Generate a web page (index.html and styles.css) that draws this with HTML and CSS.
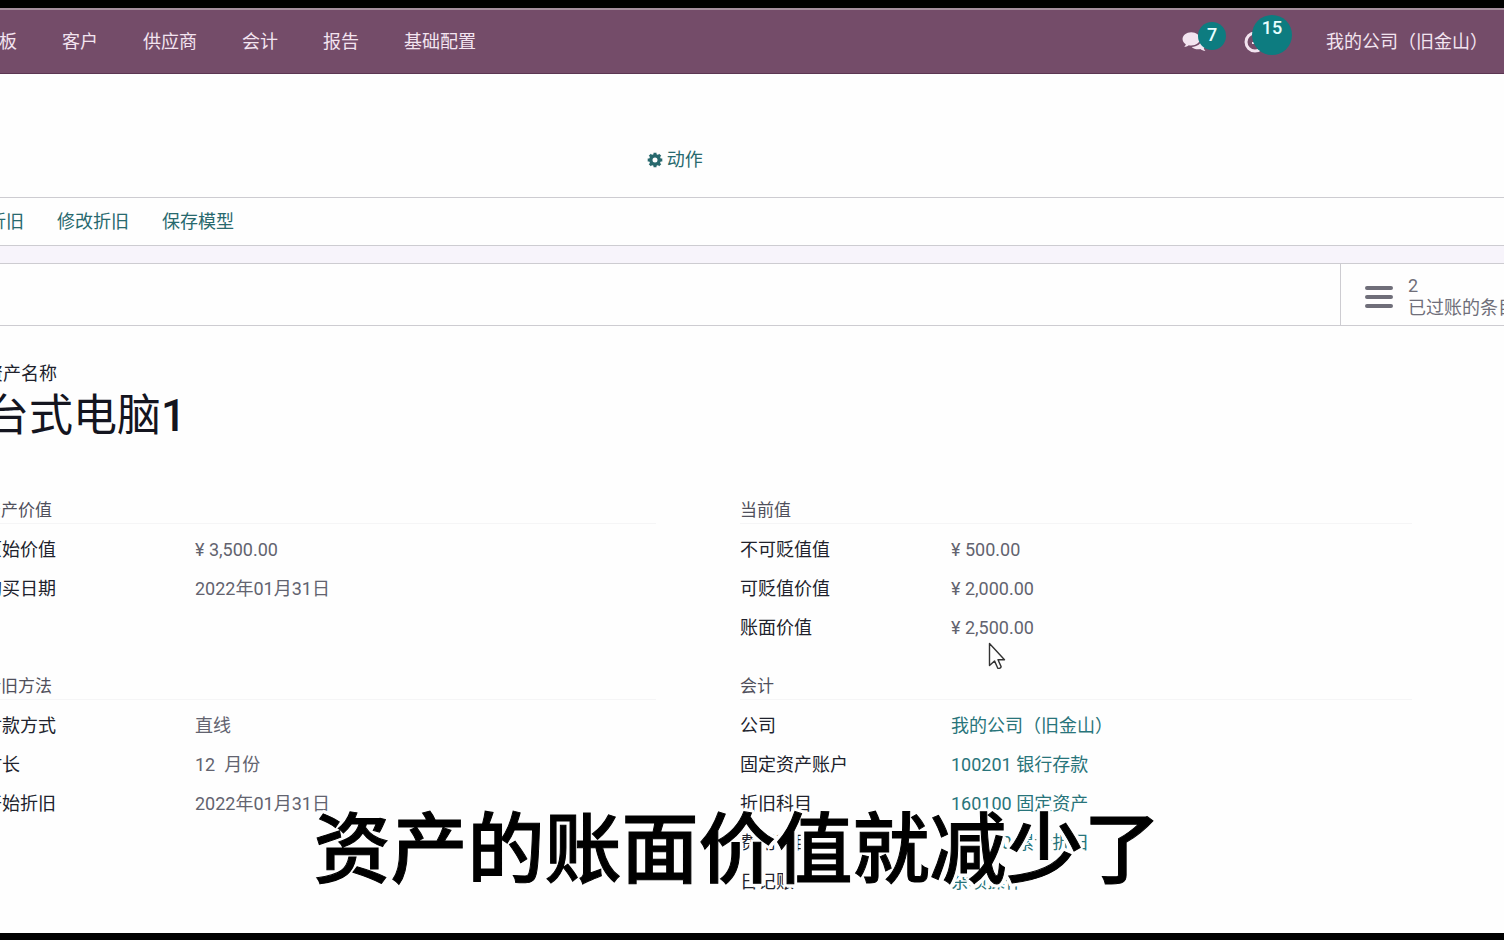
FILE: index.html
```html
<!DOCTYPE html>
<html lang="zh-CN">
<head>
<meta charset="utf-8">
<title>台式电脑1</title>
<link rel="stylesheet" href="styles.css">
</head>
<body>
<header class="navbar">
  <nav class="menu">
    <a href="#">仪表板</a>
    <a href="#">客户</a>
    <a href="#">供应商</a>
    <a href="#">会计</a>
    <a href="#">报告</a>
    <a href="#">基础配置</a>
  </nav>
  <div class="systray">
    <button class="tray" type="button" aria-label="消息">
      <svg viewBox="0 0 22 20" width="24" height="22"><path fill="currentColor" d="M8.500 1C4 1 .500 3.800.500 7.200c0 2 1.200 3.700 3 4.800-.2 1-.8 1.800-1.500 2.500 1.600-.1 3-.7 4.200-1.600.7.200 1.500.2 2.300.2 4.500 0 8-2.600 8-5.900S13 1 8.500 1z"/><path fill="currentColor" d="M18 7.500c0 4-4.200 7-9.200 7 1.500 1.400 3.600 2.200 6 2.200.7 0 1.400-.1 2-.2 1.200.9 2.700 1.600 4.700 1.700-.8-.8-1.300-1.600-1.500-2.500 1.200-.9 2-2.200 2-3.700 0-1.900-1.600-3.600-4-4.500z"/></svg>
      <span class="badge">7</span>
    </button>
    <button class="tray" type="button" aria-label="活动">
      <svg viewBox="0 0 22 22" width="22" height="22"><circle cx="11" cy="11" r="9" fill="none" stroke="currentColor" stroke-width="3"/><path d="M12 6v6H8" fill="none" stroke="currentColor" stroke-width="2"/></svg>
      <span class="badge badge-large">15</span>
    </button>
    <button class="company" type="button">我的公司（旧金山）</button>
  </div>
</header>

<div class="control-panel">
  <button class="action" type="button">
    <svg viewBox="0 0 16 16" width="16" height="16"><circle cx="8" cy="8" r="4.200" fill="none" stroke="currentColor" stroke-width="3.400"/><path d="M8 .700v3M8 12.300v3M.700 8h3M12.300 8h3M2.800 2.800l2 2M11.200 11.200l2 2M2.800 13.200l2-2M11.200 4.800l2-2" stroke="currentColor" stroke-width="3"/></svg>
    动作
  </button>
</div>

<div class="statusbar">
  <button type="button">计算折旧</button>
  <button type="button">修改折旧</button>
  <button type="button">保存模型</button>
</div>

<main class="sheet">
  <div class="button-box">
    <button class="stat" type="button">
      <svg viewBox="0 0 28 24" width="28" height="24"><path d="M2 3h24M2 12h24M2 21h24" stroke="currentColor" stroke-width="4" stroke-linecap="round"/></svg>
      <span class="stat-text"><span>2</span><span>已过账的条目</span></span>
    </button>
  </div>

  <div class="heading">
    <p>资产名称</p>
    <h1>台式电脑<span>1</span></h1>
  </div>

  <div class="groups">
    <section>
      <h2>资产价值</h2>
      <dl>
        <dt>原始价值</dt><dd>¥ 3,500.00</dd>
        <dt>购买日期</dt><dd>2022年01月31日</dd>
      </dl>
    </section>
    <section>
      <h2>当前值</h2>
      <dl>
        <dt>不可贬值值</dt><dd>¥ 500.00</dd>
        <dt>可贬值价值</dt><dd>¥ 2,000.00</dd>
        <dt>账面价值</dt><dd>¥ 2,500.00</dd>
      </dl>
    </section>
    <section>
      <h2>折旧方法</h2>
      <dl>
        <dt>付款方式</dt><dd>直线</dd>
        <dt>时长</dt><dd>12 &nbsp;月份</dd>
        <dt>开始折旧</dt><dd>2022年01月31日</dd>
      </dl>
    </section>
    <section>
      <h2>会计</h2>
      <dl>
        <dt>公司</dt><dd><a href="#">我的公司（旧金山）</a></dd>
        <dt>固定资产账户</dt><dd><a href="#">100201 银行存款</a></dd>
        <dt>折旧科目</dt><dd><a href="#">160100 固定资产</a></dd>
        <dt>费用科目</dt><dd><a href="#">160200 累计折旧</a></dd>
        <dt>日记账</dt><dd><a href="#">杂项操作</a></dd>
      </dl>
    </section>
  </div>
</main>

<svg class="cursor" viewBox="0 0 18 28" width="18" height="28"><path d="M1.500 1.500v22l5-4.600 3.300 7.400c1.600.3 3.200-.5 3.300-1.700L10 17.700h6.500z" fill="#fff" stroke="#333" stroke-width="1.400" stroke-linejoin="round"/></svg>
<p class="caption">资产的账面价值就减少了</p>
</body>
</html>
```
FILE: styles.css
```css
* { box-sizing: border-box; }

body {
  margin: 0;
  min-height: 100vh;
  display: flex;
  flex-direction: column;
  position: relative;
  overflow: hidden;
  border-top: 8px solid #000;
  border-bottom: 7px solid #000;
  background: #fefefe;
  color: #20222c;
  font: 18px/24px Roboto, "Noto Sans CJK SC", sans-serif;
}

h1, h2, p, dl, dd { margin: 0; font-weight: 400; }
a { color: #28747a; text-decoration: none; }
button { padding: 0; border: 0; background: none; color: inherit; font: inherit; white-space: nowrap; }
svg { display: block; flex: none; }

.navbar {
  height: 66px;
  display: flex;
  align-items: center;
  justify-content: space-between;
  border-top: 2px solid #a48e9d;
  border-bottom: 1px solid #5b3652;
  background: #744c69;
  color: #f3e4f0;
}
.menu { display: flex; gap: 45px; margin-left: -37px; }
.menu a { color: inherit; white-space: nowrap; }
.systray { display: flex; align-items: center; padding-right: 16px; }
.tray { position: relative; height: 24px; width: 62px; }
.badge {
  position: absolute;
  left: 16px;
  top: -8px;
  width: 28px;
  height: 28px;
  border-radius: 50%;
  background: #0d7c80;
  color: #e6ffff;
  font-weight: 500;
  line-height: 26px;
  text-align: center;
}
.badge-large { left: 8px; top: -15px; width: 40px; height: 40px; }
.company { margin-left: 20px; }

.control-panel {
  height: 123px;
  display: flex;
  align-items: flex-start;
  padding: 74px 0 0 43%;
}
.action { display: flex; align-items: center; gap: 4px; color: #28696e; }

.statusbar {
  display: flex;
  gap: 33px;
  height: 49px;
  align-items: center;
  border: solid #cdccd1;
  border-width: 1px 0;
  color: #28696e;
}
.statusbar button:first-child { margin-left: -48px; }

.sheet { margin-top: 17px; box-shadow: 0 -17px #f7f4fb; border-top: 1px solid #cdccd1; }
.button-box { display: flex; justify-content: flex-end; border-bottom: 1px solid #cdccd1; }
.stat {
  display: flex;
  align-items: center;
  gap: 15px;
  width: 164px;
  height: 61px;
  padding: 4px 0 0 24px;
  border-left: 1px solid #cdccd1;
  color: #6f6e79;
}
.stat-text { display: flex; flex-direction: column; line-height: 22px; text-align: left; }

.heading { margin-left: -15px; padding-top: 36px; }
.heading h1 { color: #14151f; font-size: 44px; line-height: 60px; }
.heading h1 span { font-weight: 500; }

.groups {
  display: grid;
  grid-template-columns: 1fr 1fr;
  column-gap: 84px;
  row-gap: 26px;
  margin: 51px 92px 0 -16px;
}
.groups h2 { border-bottom: 1px solid #f5f5f6; color: #50505c; font-size: 17px; line-height: 26px; }
.groups dl { display: grid; grid-template-columns: 211px 1fr; padding-top: 6px; line-height: 39px; }
.groups dd { color: #62636f; }

.cursor { position: absolute; left: 988px; top: 634px; }
.caption {
  position: absolute;
  left: 0;
  right: 0;
  top: 787px;
  padding-right: 30px;
  color: #000;
  font-size: 77px;
  font-weight: 500;
  line-height: 112px;
  text-align: center;
  white-space: nowrap;
  -webkit-text-stroke: 1px #000;
  text-shadow:
    4px 0 #fefefe, -4px 0 #fefefe, 0 4px #fefefe, 0 -4px #fefefe,
    3px 3px #fefefe, -3px 3px #fefefe, 3px -3px #fefefe, -3px -3px #fefefe;
}
```
